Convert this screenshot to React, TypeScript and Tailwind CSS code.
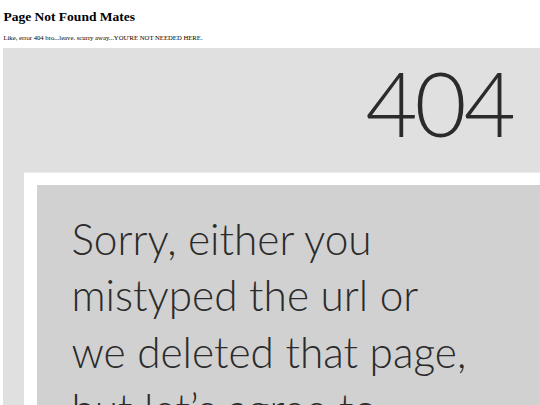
import React from 'react';

export default function App() {
    return (
        <div className="min-h-screen w-full overflow-hidden bg-white px-[3.4px] pt-px font-['Liberation_Serif',serif] text-black">
            <h1 className="mt-[8px] mb-[9px] text-[13.5px] font-bold leading-[1.15]">Page Not Found Mates</h1>
            <p className="mb-[6.7px] text-[6.7px] leading-[1.15]">Like, error 404 bro...leave. scurry away...YOU'RE NOT NEEDED HERE.</p>

            {/* 404 picture */}
            <div className="w-[640px] bg-[#e0e0e0] pt-[9px] font-['Lato',sans-serif] text-[#2b2b2b]">
                <div className="pl-[362px] text-[90px] font-light leading-[90px] tracking-[-3px]">404</div>
                <div className="mt-[25px] ml-[21px] border-t border-[#ececec] bg-white pt-[12px] pl-[13px]">
                    <div className="bg-[#d1d1d1] pt-[25.8px] pl-[34px] pb-10 text-[42.4px] font-light leading-[56.7px]">
                        <p>Sorry, either you</p>
                        <p>mistyped the url or</p>
                        <p>we deleted that page,</p>
                        <p>but let’s agree to</p>
                    </div>
                </div>
            </div>
        </div>
    );
}
